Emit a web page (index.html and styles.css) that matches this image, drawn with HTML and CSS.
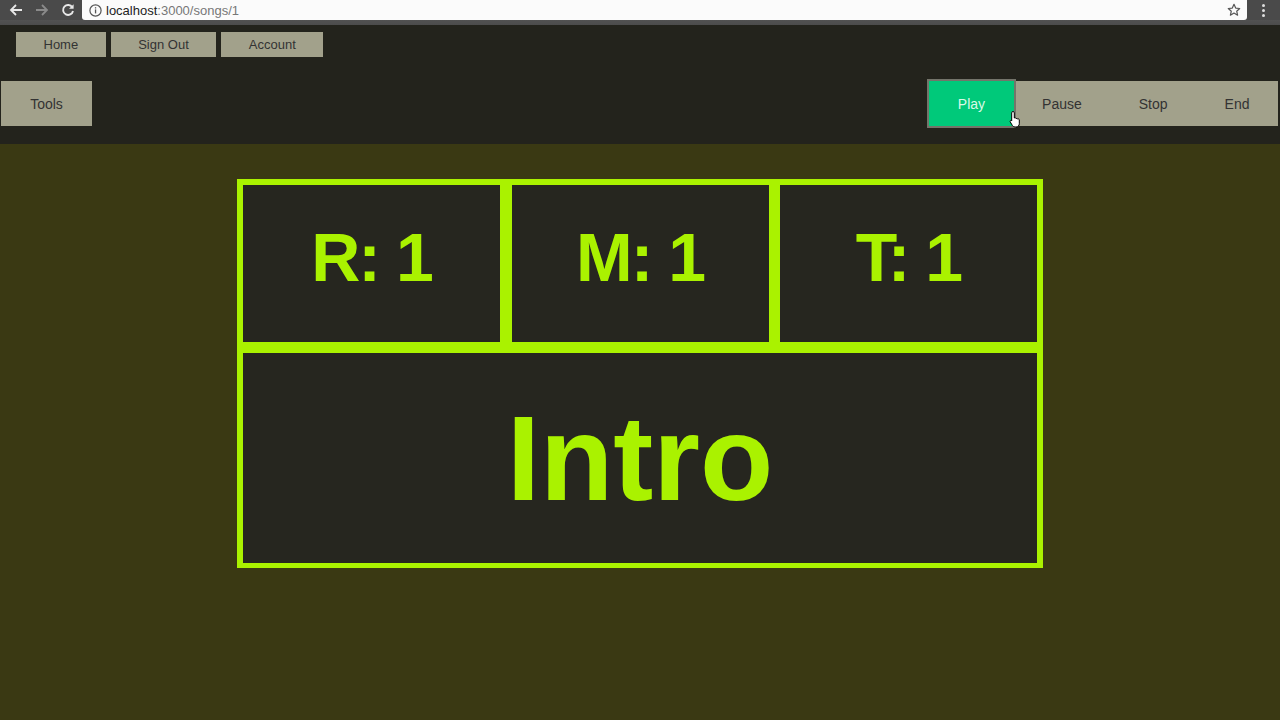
FILE: index.html
```html
<!DOCTYPE html>
<html lang="en">
<head>
<meta charset="utf-8">
<title>Song 1</title>
<link rel="stylesheet" href="styles.css">
</head>
<body>
<div class="chrome">
  <div class="chrome-bar">
    <div class="nav-icons">
      <svg class="ic" width="14" height="14" viewBox="0 0 14 14"><path d="M13 7H2.5M7 2L2 7l5 5" fill="none" stroke="#e8e8e8" stroke-width="1.8"/></svg>
      <svg class="ic dim" width="14" height="14" viewBox="0 0 14 14"><path d="M1 7h10.5M7 2l5 5-5 5" fill="none" stroke="#8a8a8a" stroke-width="1.8"/></svg>
      <svg class="ic" width="14" height="14" viewBox="0 0 14 14"><path d="M11.3 4.2A5 5 0 1 0 12 8" fill="none" stroke="#e8e8e8" stroke-width="1.9"/><path d="M12.6 1.2v4.6H8z" fill="#e8e8e8"/></svg>
    </div>
    <div class="omnibox">
      <svg width="13" height="13" viewBox="0 0 13 13"><circle cx="6.5" cy="6.5" r="5.6" fill="none" stroke="#555" stroke-width="1.2"/><rect x="5.9" y="5.4" width="1.3" height="4" fill="#555"/><rect x="5.9" y="3.2" width="1.3" height="1.3" fill="#555"/></svg>
      <span class="url"><span class="host">localhost</span>:3000/songs/1</span>
      <svg class="star" width="14" height="14" viewBox="0 0 14 14"><path d="M7 1.3l1.7 3.8 4 .4-3 2.7.9 4-3.6-2.1-3.6 2.1.9-4-3-2.7 4-.4z" fill="none" stroke="#555" stroke-width="1.2" stroke-linejoin="round"/></svg>
    </div>
    <div class="menu-dots"><span></span><span></span><span></span></div>
  </div>
</div>

<header class="top">
  <nav class="site-nav">
    <a class="btn nav-btn">Home</a>
    <a class="btn nav-btn">Sign Out</a>
    <a class="btn nav-btn">Account</a>
  </nav>
  <div class="toolbar">
    <button class="btn tool-btn">Tools</button>
    <div class="transport">
      <button class="btn t-btn play">Play</button>
      <button class="btn t-btn">Pause</button>
      <button class="btn t-btn">Stop</button>
      <button class="btn t-btn">End</button>
      <svg class="cursor" width="14" height="18" viewBox="0 0 14 18"><path d="M4 1.5c.8 0 1.3.5 1.3 1.3V8l.4-.1c.7-.2 1.3.1 1.5.6.6-.3 1.3 0 1.5.5.7-.3 1.5.1 1.6.8v4c0 1.6-1.2 3.2-3.3 3.2H6c-1.2 0-2-.6-2.6-1.5L1.3 12c-.4-.6-.2-1.3.4-1.5.5-.2 1 0 1.3.4l-.3-.5V2.8C2.7 2 3.2 1.5 4 1.5z" fill="#fff" stroke="#000" stroke-width="1"/></svg>
    </div>
  </div>
</header>

<main class="stage">
  <section class="board">
    <div class="cell small">R: 1</div>
    <div class="cell small">M: 1</div>
    <div class="cell small">T: 1</div>
    <div class="cell big">Intro</div>
  </section>
</main>
</body>
</html>
```

FILE: styles.css
```css
html, body {
  margin: 0;
  padding: 0;
}
body {
  background: #3a3913;
  font-family: "Liberation Sans", Arial, Helvetica, sans-serif;
  width: 1280px;
  height: 720px;
  overflow: hidden;
}

/* browser chrome */
.chrome {
  height: 25px;
  background: linear-gradient(#6a6a6a, #4c4c4c);
}
.chrome-bar {
  height: 20px;
  background: #4a4a4a;
  display: flex;
  align-items: center;
}
.nav-icons {
  width: 82px;
  display: flex;
  align-items: center;
  gap: 12px;
  padding-left: 9px;
  box-sizing: border-box;
  height: 20px;
}
.ic { display: block; }
.omnibox {
  width: 1165px;
  height: 20px;
  background: #fbfbfb;
  border-radius: 0 0 3px 3px;
  display: flex;
  align-items: center;
  padding: 0 6px 0 7px;
  box-sizing: border-box;
  gap: 4px;
}
.url {
  font-size: 13px;
  color: #777;
  flex: 1;
}
.host { color: #222; }
.menu-dots {
  flex: 1;
  display: flex;
  flex-direction: column;
  align-items: center;
  gap: 2px;
}
.menu-dots span {
  width: 3px;
  height: 3px;
  border-radius: 50%;
  background: #ddd;
}

/* header */
.top {
  background: #23231c;
  height: 119px;
  padding: 7px 2px 0 1px;
  box-sizing: border-box;
}
.btn {
  background: #a2a18b;
  color: #333;
  border: none;
  font-family: "Liberation Sans", Arial, Helvetica, sans-serif;
  display: flex;
  align-items: center;
  justify-content: center;
  box-sizing: border-box;
  margin: 0;
}
.site-nav {
  display: flex;
  gap: 5px;
  padding-left: 15px;
}
.nav-btn {
  height: 25px;
  font-size: 13px;
  padding: 0 27.5px;
}
.toolbar {
  margin-top: 24px;
  display: flex;
  justify-content: space-between;
  align-items: center;
}
.tool-btn {
  width: 91px;
  height: 45px;
  font-size: 14px;
}
.transport {
  display: flex;
  position: relative;
}
.t-btn {
  height: 45px;
  font-size: 14px;
  padding: 0 28.5px;
}
.t-btn.play {
  background: #00c97a;
  color: #d9f9e6;
  outline: 2px solid #74746a;
  position: relative;
  z-index: 1;
}
.cursor {
  position: absolute;
  left: 80px;
  top: 29px;
  z-index: 2;
}

/* board */
.stage {
  padding-top: 35px;
  display: flex;
  justify-content: center;
}
.board {
  width: 806px;
  background: #aaf200;
  padding: 6px 6px 5px;
  box-sizing: border-box;
  display: grid;
  grid-template-columns: 1fr 1fr 1fr;
  grid-template-rows: 157px 210px;
  column-gap: 11.5px;
  row-gap: 11px;
}
.cell {
  background: #26261f;
  color: #aaf200;
  font-weight: bold;
  display: flex;
  justify-content: center;
  line-height: 1;
}
.cell.small {
  font-size: 68px;
  letter-spacing: -2px;
  align-items: flex-start;
  padding-top: 38px;
}
.cell.big {
  grid-column: 1 / 4;
  font-size: 120px;
  align-items: center;
}
```
